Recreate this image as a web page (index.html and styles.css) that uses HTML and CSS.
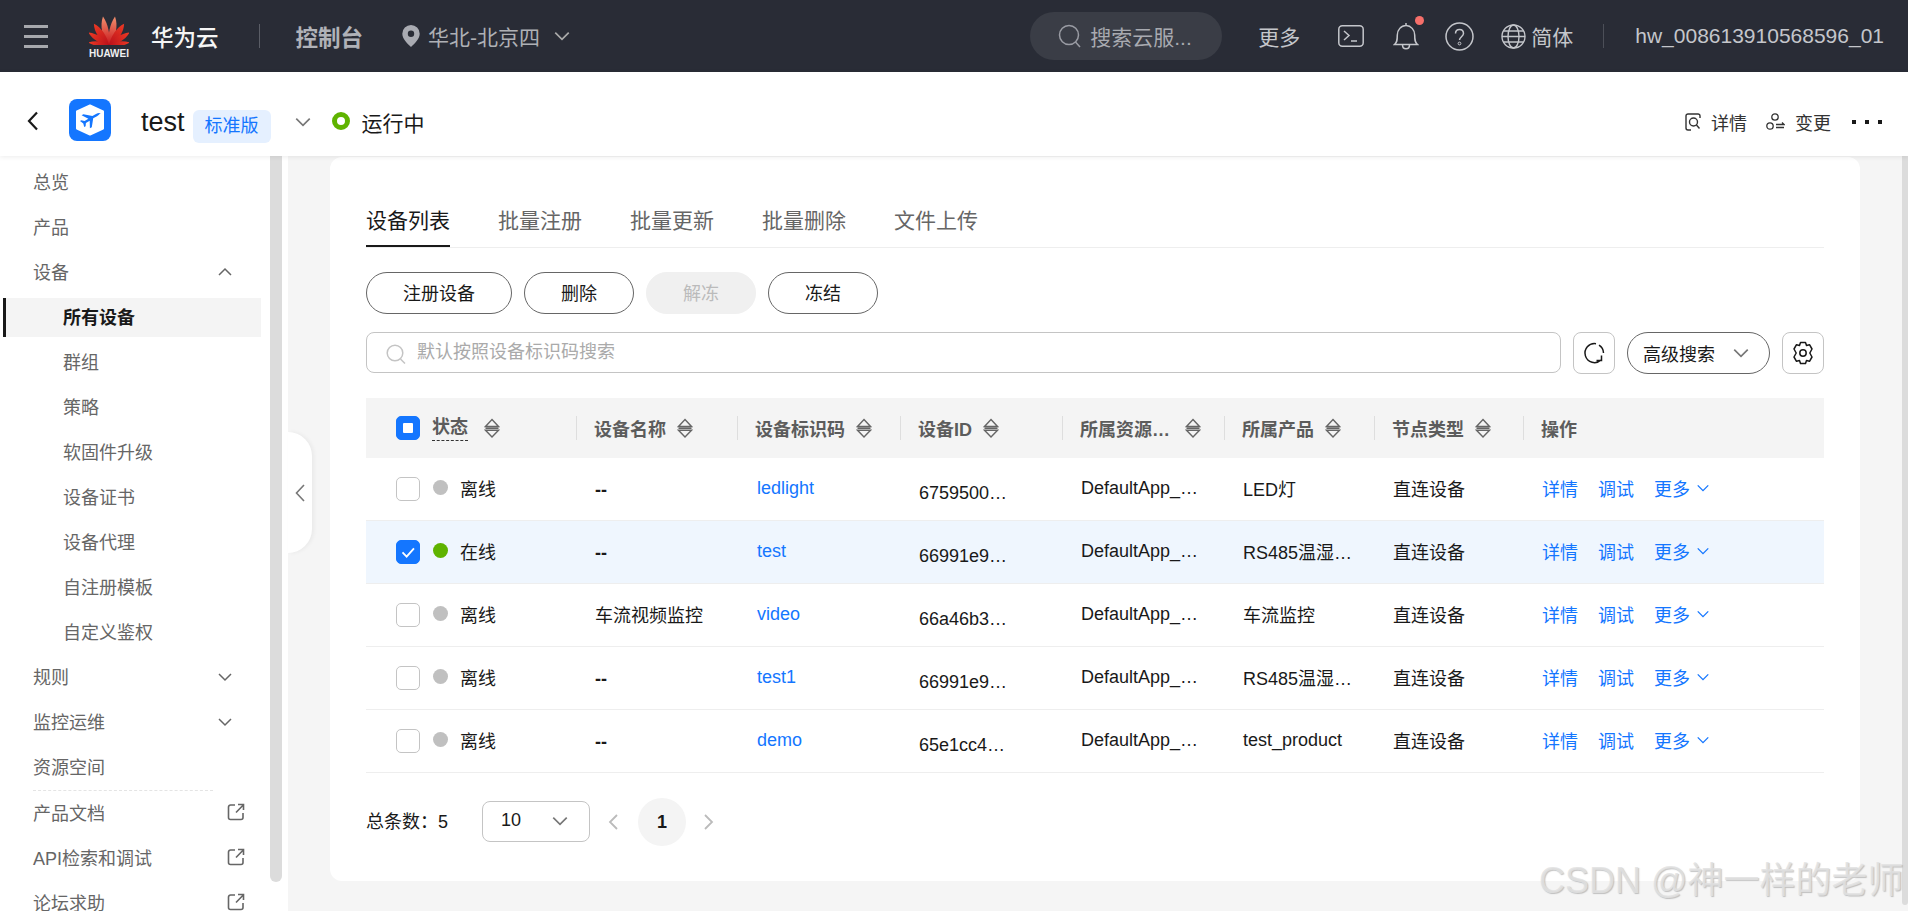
FILE: index.html
```html
<!DOCTYPE html>
<html lang="zh-CN">
<head>
<meta charset="utf-8">
<title>设备列表</title>
<link rel="stylesheet" href="styles.css">
</head>
<body>
<svg class="defs" width="0" height="0" aria-hidden="true">
  <defs>
    <linearGradient id="petalA" x1="0" y1="1" x2="0" y2="0"><stop offset="0" stop-color="#c8141a"/><stop offset="1" stop-color="#f2916f"/></linearGradient>
    <linearGradient id="petalB" x1="0" y1="1" x2="0" y2="0"><stop offset="0" stop-color="#b8101a"/><stop offset="1" stop-color="#ee3a24"/></linearGradient>
    <symbol id="sort" viewBox="0 0 16 20"><path d="M8 1.500 14.500 8.500h-13zM1.500 10.300h13" fill="none" stroke="#666" stroke-width="1.400"/><path d="M1.500 12.300h13L8 19z" fill="none" stroke="#666" stroke-width="1.400"/></symbol>
    <symbol id="down" viewBox="0 0 16 16"><path d="M2 5l6 6 6-6" fill="none" stroke="currentColor" stroke-width="1.500"/></symbol>
    <symbol id="ext" viewBox="0 0 18 18"><path d="M8 2H3.500A2 2 0 0 0 1.500 4v10.500a2 2 0 0 0 2 2H14a2 2 0 0 0 2-2V10M9 9.500 16.500 1.800M11 1.500h5.500V7" fill="none" stroke="#666" stroke-width="1.600"/></symbol>
  </defs>
</svg>

<header class="topbar">
  <div class="hamburger"><i></i><i></i><i></i></div>
  <div class="logo">
    <svg class="logo-petals" viewBox="0 0 40 30">
      <g transform="translate(20 30)">
        <path transform="rotate(-9)" d="M0 0C-6-8-6-21-1.500-29 2.500-21 3-9 0 0z" fill="url(#petalA)"/>
        <path transform="rotate(9)" d="M0 0C6-8 6-21 1.500-29-2.500-21-3-9 0 0z" fill="url(#petalA)"/>
        <path transform="rotate(-31)" d="M0 0C-6-8-6-19-2-26 2.500-19 3-9 0 0z" fill="url(#petalB)"/>
        <path transform="rotate(31)" d="M0 0C6-8 6-19 2-26-2.500-19-3-9 0 0z" fill="url(#petalB)"/>
        <path transform="rotate(-54)" d="M0 0C-5-7-5-17-2-24 2-17 3-8 0 0z" fill="url(#petalB)"/>
        <path transform="rotate(54)" d="M0 0C5-7 5-17 2-24-2-17-3-8 0 0z" fill="url(#petalB)"/>
        <path transform="rotate(-78)" d="M0 0C-4-6-4-15-2-21 2-15 2.500-7 0 0z" fill="url(#petalB)"/>
        <path transform="rotate(78)" d="M0 0C4-6 4-15 2-21-2-15-2.500-7 0 0z" fill="url(#petalB)"/>
      </g>
    </svg>
    <span class="logo-word">HUAWEI</span>
  </div>
  <span class="brand">华为云</span>
  <span class="top-sep"></span>
  <span class="console">控制台</span>
  <svg class="pin" viewBox="0 0 18 22"><path fill-rule="evenodd" d="M9 0a8.700 8.700 0 0 1 8.700 8.700C17.700 14 12 19 9 22 6 19 .3 14 .3 8.700A8.700 8.700 0 0 1 9 0zm0 5.500a3.200 3.200 0 1 0 0 6.400 3.200 3.200 0 0 0 0-6.400z" fill="#a9abb2"/></svg>
  <span class="region">华北-北京四</span>
  <svg class="region-arrow"><use href="#down"/></svg>
  <div class="top-right">
    <div class="top-search">
      <svg class="top-search-ic" viewBox="0 0 24 24"><circle cx="11" cy="11" r="9.500" fill="none" stroke="#9a9ca4" stroke-width="1.500"/><path d="M17.500 18 22 23" stroke="#9a9ca4" stroke-width="1.500"/></svg>
      <span>搜索云服...</span>
    </div>
    <span class="top-more">更多</span>
    <svg class="ic-term" viewBox="0 0 26 22"><rect x=".8" y=".8" width="24.400" height="20.400" rx="3.500" fill="none" stroke="#c4c6cb" stroke-width="1.500"/><path d="M6 6l5 4.500-5 4.500M13 16h6" fill="none" stroke="#c4c6cb" stroke-width="1.500"/></svg>
    <div class="bell-wrap">
      <svg class="ic-bell" viewBox="0 0 26 28"><path d="M1.500 22.500c2.500-2 2.800-4 2.800-9.500 0-5 3.700-9.500 8.700-9.500s8.700 4.500 8.700 9.500c0 5.500.3 7.500 2.800 9.500zM13 1v2.500M9.500 23c0 5 7 5 7 0" fill="none" stroke="#c4c6cb" stroke-width="1.500"/></svg>
      <i class="bell-dot"></i>
    </div>
    <svg class="ic-help" viewBox="0 0 29 29"><circle cx="14.500" cy="14.500" r="13.500" fill="none" stroke="#c4c6cb" stroke-width="1.500"/><path d="M10.500 11.500c0-5.500 8-5.500 8 0 0 3-4 3.500-4 6.500" fill="none" stroke="#c4c6cb" stroke-width="1.500"/><circle cx="14.500" cy="21.500" r="1.400" fill="none" stroke="#c4c6cb" stroke-width="1"/></svg>
    <svg class="ic-globe" viewBox="0 0 25 25"><g fill="none" stroke="#c4c6cb" stroke-width="1.400"><circle cx="12.500" cy="12.500" r="11.500"/><ellipse cx="12.500" cy="12.500" rx="5.500" ry="11.500"/><path d="M1 12.500h23M2.500 7h20M2.500 18h20"/></g></svg>
    <span class="lang">简体</span>
    <span class="top-sep2"></span>
    <span class="user">hw_008613910568596_01</span>
  </div>
</header>

<section class="subbar">
  <svg class="back" viewBox="0 0 12 20"><path d="M10 1.500 2 10l8 8.500" fill="none" stroke="#191919" stroke-width="2.200"/></svg>
  <svg class="app-icon" viewBox="0 0 42 42">
    <rect width="42" height="42" rx="8" fill="#1476ff"/>
    <path d="M21 6.500 34 12.500v17L21 35.500 8 29.500v-17z" fill="#fff" stroke="#fff" stroke-width="2" stroke-linejoin="round"/>
    <path d="M32 14.500c-1.500-.8-3.500-.2-5 .6l-3.600 2-9-1.800-1.800 1 6.800 3.400-3.800 2.300-3.300-.8-1.300.8 3.300 2.400.9 3.700 1.400-.8.300-3.300 3.800-2.200.2 7.400 1.900-1 1.400-8.900 3.800-2.100c1.400-.9 2.800-2 2.900-2.900z" fill="#1476ff"/>
  </svg>
  <span class="app-name">test</span>
  <span class="badge">标准版</span>
  <svg class="sub-arrow"><use href="#down"/></svg>
  <i class="status-ring"></i>
  <span class="running">运行中</span>
  <div class="sub-right">
    <svg class="ic-detail" viewBox="0 0 16 18"><path d="M15 5V3a2 2 0 0 0-2-2H3a2 2 0 0 0-2 2v12a2 2 0 0 0 2 2h3" fill="none" stroke="#333" stroke-width="1.400"/><circle cx="8.500" cy="9" r="4" fill="none" stroke="#333" stroke-width="1.400"/><path d="M11.500 12l3 3.500" stroke="#333" stroke-width="1.400"/></svg>
    <span class="sub-link">详情</span>
    <svg class="ic-change" viewBox="0 0 19 18"><g fill="none" stroke="#333" stroke-width="1.300"><circle cx="9" cy="4" r="3.200"/><circle cx="4" cy="13" r="3.200"/><path d="M10 11.500h8l-2-2M18 14.500h-8"/></g></svg>
    <span class="sub-link">变更</span>
    <span class="dots"><i></i><i></i><i></i></span>
  </div>
</section>

<div class="layout">
  <nav class="sidebar">
    <a class="nav">总览</a>
    <a class="nav">产品</a>
    <a class="nav">设备<svg class="nav-arrow up"><use href="#down"/></svg></a>
    <a class="nav sub active">所有设备</a>
    <a class="nav sub">群组</a>
    <a class="nav sub">策略</a>
    <a class="nav sub">软固件升级</a>
    <a class="nav sub">设备证书</a>
    <a class="nav sub">设备代理</a>
    <a class="nav sub">自注册模板</a>
    <a class="nav sub">自定义鉴权</a>
    <a class="nav">规则<svg class="nav-arrow"><use href="#down"/></svg></a>
    <a class="nav">监控运维<svg class="nav-arrow"><use href="#down"/></svg></a>
    <a class="nav">资源空间</a>
    <div class="nav-sep"></div>
    <a class="nav">产品文档<svg class="nav-ext"><use href="#ext"/></svg></a>
    <a class="nav">API检索和调试<svg class="nav-ext"><use href="#ext"/></svg></a>
    <a class="nav">论坛求助<svg class="nav-ext"><use href="#ext"/></svg></a>
    <div class="side-scroll"></div>
  </nav>

  <main class="main">
    <div class="collapse">
      <svg viewBox="0 0 10 18"><path d="M9 1 1.500 9 9 17" fill="none" stroke="#777" stroke-width="1.600"/></svg>
    </div>
    <div class="card">
      <div class="tabs">
        <a class="tab active">设备列表</a>
        <a class="tab">批量注册</a>
        <a class="tab">批量更新</a>
        <a class="tab">批量删除</a>
        <a class="tab">文件上传</a>
      </div>
      <div class="toolbar">
        <button class="btn wide">注册设备</button>
        <button class="btn">删除</button>
        <button class="btn disabled">解冻</button>
        <button class="btn">冻结</button>
      </div>
      <div class="searchrow">
        <div class="search">
          <svg class="search-ic" viewBox="0 0 20 20"><circle cx="9" cy="9" r="7.800" fill="none" stroke="#c4c4c4" stroke-width="1.500"/><path d="M14.500 15 19 19.500" stroke="#c4c4c4" stroke-width="1.500"/></svg>
          <span>默认按照设备标识码搜索</span>
        </div>
        <div class="sq-btn">
          <svg viewBox="0 0 24 24" class="sq-ic"><path d="M14 2.700A9.500 9.500 0 1 0 19 19M19.500 14.500V19.500H14.500M17 4.200A9.500 9.500 0 0 1 21.500 12" fill="none" stroke="#191919" stroke-width="1.500"/></svg>
        </div>
        <div class="adv">高级搜索<svg class="adv-arrow"><use href="#down"/></svg></div>
        <div class="sq-btn">
          <svg viewBox="0 0 24 24" class="sq-ic"><path d="M9.500 1.500h5l1 3 3-.8 2.500 4.300L18.800 12l2.200 4-2.500 4.300-3-.8-1 3h-5l-1-3-3 .8L3 16l2.200-4L3 8l2.500-4.300 3 .8z" fill="none" stroke="#191919" stroke-width="1.500" stroke-linejoin="round"/><circle cx="12" cy="12" r="3.200" fill="none" stroke="#191919" stroke-width="1.500"/></svg>
        </div>
      </div>

      <div class="table">
        <div class="row head">
          <div class="cell first"><i class="check partial"></i><span class="th dashed">状态</span><svg class="sort s-first"><use href="#sort"/></svg></div>
          <div class="cell sep"><span class="th">设备名称</span><svg class="sort"><use href="#sort"/></svg></div>
          <div class="cell sep"><span class="th">设备标识码</span><svg class="sort"><use href="#sort"/></svg></div>
          <div class="cell sep"><span class="th">设备ID</span><svg class="sort"><use href="#sort"/></svg></div>
          <div class="cell sep"><span class="th clip">所属资源…</span><svg class="sort"><use href="#sort"/></svg></div>
          <div class="cell sep"><span class="th">所属产品</span><svg class="sort"><use href="#sort"/></svg></div>
          <div class="cell sep"><span class="th">节点类型</span><svg class="sort"><use href="#sort"/></svg></div>
          <div class="cell sep"><span class="th">操作</span></div>
        </div>

        <div class="row">
          <div class="cell first"><i class="check"></i><i class="dot"></i><span>离线</span></div>
          <div class="cell dash">--</div>
          <div class="cell"><a class="link">ledlight</a></div>
          <div class="cell low">6759500…</div>
          <div class="cell">DefaultApp_…</div>
          <div class="cell">LED灯</div>
          <div class="cell">直连设备</div>
          <div class="cell ops"><a class="link">详情</a><a class="link">调试</a><a class="link">更多<svg class="op-arrow"><use href="#down"/></svg></a></div>
        </div>
        <div class="row selected">
          <div class="cell first"><i class="check on"><svg viewBox="0 0 24 24"><path d="M6 12.500l4.500 4.500L18.500 8" fill="none" stroke="#fff" stroke-width="2"/></svg></i><i class="dot online"></i><span>在线</span></div>
          <div class="cell dash">--</div>
          <div class="cell"><a class="link">test</a></div>
          <div class="cell low">66991e9…</div>
          <div class="cell">DefaultApp_…</div>
          <div class="cell">RS485温湿…</div>
          <div class="cell">直连设备</div>
          <div class="cell ops"><a class="link">详情</a><a class="link">调试</a><a class="link">更多<svg class="op-arrow"><use href="#down"/></svg></a></div>
        </div>
        <div class="row">
          <div class="cell first"><i class="check"></i><i class="dot"></i><span>离线</span></div>
          <div class="cell">车流视频监控</div>
          <div class="cell"><a class="link">video</a></div>
          <div class="cell low">66a46b3…</div>
          <div class="cell">DefaultApp_…</div>
          <div class="cell">车流监控</div>
          <div class="cell">直连设备</div>
          <div class="cell ops"><a class="link">详情</a><a class="link">调试</a><a class="link">更多<svg class="op-arrow"><use href="#down"/></svg></a></div>
        </div>
        <div class="row">
          <div class="cell first"><i class="check"></i><i class="dot"></i><span>离线</span></div>
          <div class="cell dash">--</div>
          <div class="cell"><a class="link">test1</a></div>
          <div class="cell low">66991e9…</div>
          <div class="cell">DefaultApp_…</div>
          <div class="cell">RS485温湿…</div>
          <div class="cell">直连设备</div>
          <div class="cell ops"><a class="link">详情</a><a class="link">调试</a><a class="link">更多<svg class="op-arrow"><use href="#down"/></svg></a></div>
        </div>
        <div class="row">
          <div class="cell first"><i class="check"></i><i class="dot"></i><span>离线</span></div>
          <div class="cell dash">--</div>
          <div class="cell"><a class="link">demo</a></div>
          <div class="cell low">65e1cc4…</div>
          <div class="cell">DefaultApp_…</div>
          <div class="cell">test_product</div>
          <div class="cell">直连设备</div>
          <div class="cell ops"><a class="link">详情</a><a class="link">调试</a><a class="link">更多<svg class="op-arrow"><use href="#down"/></svg></a></div>
        </div>
      </div>

      <div class="pager">
        <span class="total">总条数：5</span>
        <div class="size"><span>10</span><svg class="size-arrow"><use href="#down"/></svg></div>
        <svg class="pg-arrow" viewBox="0 0 12 18"><path d="M10 2 3 9l7 7" fill="none" stroke="#bbb" stroke-width="1.800"/></svg>
        <span class="page">1</span>
        <svg class="pg-arrow" viewBox="0 0 12 18"><path d="M2 2l7 7-7 7" fill="none" stroke="#bbb" stroke-width="1.800"/></svg>
      </div>
    </div>
    <div class="main-scroll"></div>
  </main>
</div>
<div class="watermark">CSDN @神一样的老师</div>
</body>
</html>
```

FILE: styles.css
```css
* { box-sizing: border-box; }
html, body { margin: 0; height: 100%; overflow: hidden; }
body {
  width: 1908px; height: 911px; position: relative;
  display: flex; flex-direction: column;
  font: 18px "Liberation Sans", "Noto Sans CJK SC", sans-serif;
  color: #191919; background: #f5f5f5;
}
.defs { position: absolute; }
i { display: block; font-style: normal; }

/* top bar */
.topbar { height: 72px; flex: none; background: #292c36; display: flex; align-items: center; padding-left: 24px; color: #b4b6bb; }
.hamburger { width: 24px; height: 23px; display: flex; flex-direction: column; justify-content: space-between; }
.hamburger i { height: 3px; background: #a6a8ad; }
.logo { width: 42px; margin-left: 40px; display: flex; flex-direction: column; align-items: center; margin-top: 1px; }
.logo-petals { width: 40px; height: 30px; display: block; }
.logo-word { font-size: 10px; line-height: 11px; font-weight: 700; color: #f0f0f0; margin-top: 3px; }
.brand { margin-left: 21px; font-size: 22.500px; font-weight: 500; color: #f5f5f5; }
.top-sep { width: 1px; height: 24px; background: #5a5d66; margin-left: 40px; }
.console { margin-left: 36px; font-size: 22.500px; font-weight: 700; color: #b0b2b8; }
.pin { width: 18px; height: 22px; margin-left: 39px; }
.region { margin-left: 8px; font-size: 21px; color: #aeb0b5; }
.region-arrow { width: 18px; height: 18px; margin-left: 13px; color: #aaa; }
.top-right { margin-left: auto; display: flex; align-items: center; padding-right: 24px; }
.top-search { width: 192px; height: 48px; border-radius: 24px; background: #3a3d46; display: flex; align-items: center; padding-left: 28px; font-size: 21px; color: #a8aab0; }
.top-search-ic { width: 24px; height: 24px; margin-right: 8px; }
.top-more { margin-left: 36px; font-size: 21px; color: #c4c6cb; }
.ic-term { width: 26px; height: 22px; margin-left: 38px; }
.bell-wrap { position: relative; width: 26px; height: 28px; margin-left: 29px; }
.ic-bell { width: 26px; height: 28px; display: block; }
.bell-dot { position: absolute; left: 22px; top: -6px; width: 9px; height: 9px; border-radius: 50%; background: #f66f6a; }
.ic-help { width: 29px; height: 29px; margin-left: 26px; }
.ic-globe { width: 25px; height: 25px; margin-left: 27px; }
.lang { margin-left: 5px; font-size: 21px; color: #c4c6cb; }
.top-sep2 { width: 1px; height: 24px; background: #4c4f58; margin-left: 30px; }
.user { margin-left: 31px; font-size: 21px; color: #c4c6cb; white-space: nowrap; }

/* sub bar */
.subbar { height: 84px; flex: none; background: #fff; display: flex; align-items: center; position: relative; z-index: 3; box-shadow: 0 1px 5px rgba(0,0,0,.08); padding: 12px 0 0 27px; }
.back { width: 12px; height: 20px; margin-top: 2px; }
.app-icon { width: 42px; height: 42px; margin-left: 30px; }
.app-name { margin-left: 30px; font-size: 27px; color: #191919; margin-top: 4px; }
.badge { margin-left: 8px; width: 78px; height: 33px; line-height: 33px; text-align: center; border-radius: 6px; background: #e5f0ff; color: #1476ff; font-size: 18px; margin-top: 13px; }
.sub-arrow { width: 18px; height: 18px; margin-left: 23px; color: #777; margin-top: 3px; }
.status-ring { width: 18px; height: 18px; margin-left: 20px; border-radius: 50%; border: 5px solid #5fb300; margin-top: 2px; }
.running { margin-left: 12px; font-size: 21px; color: #191919; margin-top: 4px; }
.sub-right { margin-left: auto; display: flex; align-items: center; padding-right: 26px; margin-top: 4px; }
.ic-detail { width: 16px; height: 18px; }
.ic-change { width: 19px; height: 18px; margin-left: 19px; }
.sub-link { margin-left: 10px; font-size: 18px; color: #333; }
.dots { display: flex; gap: 9px; margin-left: 21px; }
.dots i { width: 4px; height: 4px; background: #191919; }

/* layout */
.layout { flex: 1; display: flex; min-height: 0; }
.sidebar { width: 288px; flex: none; background: #fff; padding-top: 4px; position: relative; overflow: hidden; }
.nav { height: 45px; padding: 0 0 4px 33px; display: flex; align-items: center; color: #666; position: relative; white-space: nowrap; }
.nav.sub { padding-left: 63px; }
.nav.active { height: 39px; margin: 3px 27px 3px 3px; padding-left: 57px; border-left: 3px solid #191919; background: #f4f4f4; color: #191919; font-weight: 700; }
.nav-arrow { position: absolute; left: 217px; top: 14px; width: 16px; height: 16px; color: #666; }
.nav-arrow.up { transform: rotate(180deg); }
.nav-ext { position: absolute; left: 227px; top: 12px; width: 18px; height: 18px; }
.nav-sep { height: 1px; margin: 0 75px 0 33px; border-top: 1px dashed #e4e4e4; }
.side-scroll { position: absolute; left: 270px; top: 0; width: 12px; height: 726px; border-radius: 0 0 6px 6px; background: #dcdcdc; }

/* main */
.main { flex: 1; position: relative; padding: 1px 0 0 42px; }
.collapse { position: absolute; left: 0; top: 276px; width: 24px; height: 121px; background: #fff; border-radius: 0 24px 24px 0; box-shadow: 2px 0 4px rgba(0,0,0,.05); display: flex; align-items: center; padding-left: 7px; }
.collapse svg { width: 10px; height: 18px; }
.main-scroll { position: absolute; right: 0; top: 0; width: 6px; height: 749px; border-radius: 0 0 3px 3px; background: #dcdcdc; }
.card { width: 1530px; height: 724px; background: #fff; border-radius: 12px; padding: 49px 36px 0; }

/* tabs */
.tabs { display: flex; gap: 48px; height: 42px; border-bottom: 1px solid #eeeeee; }
.tab { height: 41px; line-height: 30px; padding-bottom: 9px; border-bottom: 2px solid transparent; font-size: 21px; color: #666; }
.tab.active { color: #191919; border-bottom-color: #191919; }

/* toolbar */
.toolbar { display: flex; gap: 12px; margin-top: 24px; }
.btn { width: 110px; height: 42px; padding: 0 0 2px; border: 1px solid #666; border-radius: 21px; background: #fff; font: inherit; color: #191919; }
.btn.wide { width: 146px; }
.btn.disabled { border-color: #f0f0f0; background: #f0f0f0; color: #bbb; }

/* search row */
.searchrow { display: flex; margin-top: 18px; height: 42px; }
.search { width: 1195px; height: 41px; border: 1px solid #c4c4c4; border-radius: 8px; display: flex; align-items: center; padding: 0 0 5px 19px; color: #aaa; font-size: 18px; }
.search-ic { width: 20px; height: 20px; margin-right: 11px; margin-top: 7px; }
.sq-btn { width: 42px; height: 42px; border: 1px solid #c4c4c4; border-radius: 8px; margin-left: 12px; display: flex; align-items: center; justify-content: center; }
.sq-ic { width: 24px; height: 24px; }
.adv { width: 143px; height: 42px; border: 1px solid #666; border-radius: 21px; margin-left: 12px; padding-left: 15px; display: flex; align-items: center; }
.adv-arrow { width: 18px; height: 18px; margin-left: 17px; color: #777; }

/* table */
.table { margin-top: 24px; }
.row { display: grid; grid-template-columns: 210px 161px 163px 162px 162px 150px 149px 301px; height: 63px; border-bottom: 1px solid #eeeeee; }
.row.head { height: 60px; background: #f4f4f4; border-bottom: 0; }
.row.selected { background: #eff6fe; }
.cell { display: flex; align-items: center; padding-left: 19px; white-space: nowrap; position: relative; font-size: 18px; color: #191919; }
.row:not(.head) .cell { padding-bottom: 2px; }
.row.head .cell { padding-left: 18px; }
.row.head .cell.first, .cell.first { padding-left: 30px; }
.row:not(.head) .cell.first { padding-bottom: 1px; }
.cell.dash { font-weight: 700; padding-top: 5px; }
.cell.low { padding-top: 10px; }
.cell.sep::before { content: ""; position: absolute; left: 0; top: 18px; width: 1px; height: 24px; background: #dedede; }
.th { font-size: 18px; font-weight: 700; color: #5c5c5c; }
.th.dashed { margin-left: 12px; padding-bottom: 1px; border-bottom: 1px dashed #333; line-height: 24px; }
.th.clip { width: 91px; margin-right: 3px; }
.sort { width: 16px; height: 20px; margin-left: 11px; }
.sort.s-first { margin-left: 16px; }
.check { width: 24px; height: 24px; border: 1px solid #c4c4c4; border-radius: 5px; background: #fff; flex: none; }
.check.partial { background: #1476ff; border-color: #1476ff; position: relative; }
.check.partial::after { content: ""; position: absolute; left: 6px; top: 6px; width: 10px; height: 10px; border-radius: 1px; background: #fff; }
.check.on { background: #1476ff; border-color: #1476ff; }
.check.on svg { display: block; width: 22px; height: 22px; }
.dot { width: 15px; height: 15px; border-radius: 50%; background: #c0c0c0; margin-left: 13px; margin-right: 12px; margin-top: -3px; }
.dot.online { background: #5fb300; }
.link { color: #1476ff; font-size: 18px; }
.cell > .link:only-child { margin-left: 1px; }
.ops .link { margin-right: 20px; display: inline-flex; align-items: center; }
.op-arrow { width: 14px; height: 14px; margin-left: 6px; }
.first span:last-child { margin-top: -2px; }

/* pager */
.pager { display: flex; align-items: center; margin-top: 25px; height: 48px; }
.total { width: 116px; font-size: 18px; margin-top: -5px; }
.size { width: 108px; height: 41px; border: 1px solid #c4c4c4; border-radius: 8px; display: flex; align-items: center; padding: 0 0 0 18px; margin-top: -2px; }
.size span { width: 50px; margin-top: -1px; }
.size-arrow { width: 18px; height: 18px; color: #777; }
.pg-arrow { width: 12px; height: 18px; margin-left: 17px; }
.page { width: 48px; height: 48px; line-height: 48px; text-align: center; border-radius: 50%; background: #f4f4f4; font-size: 18px; font-weight: 700; margin-left: 19px; }

.watermark { position: absolute; left: 1539px; top: 859px; font-size: 36px; line-height: 44px; white-space: nowrap; color: rgba(226,226,226,.85); text-shadow: 1px 1px 1px rgba(140,140,140,.5); pointer-events: none; z-index: 5; }
```
